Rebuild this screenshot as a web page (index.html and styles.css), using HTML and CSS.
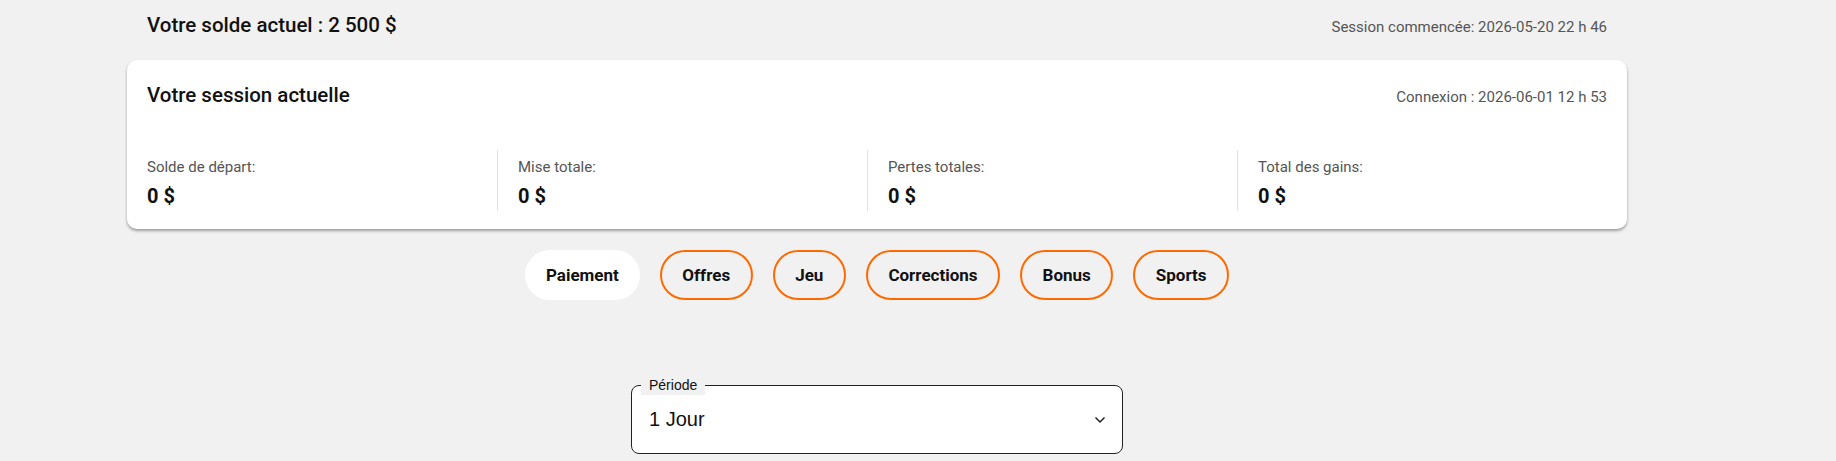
FILE: index.html
```html
<!DOCTYPE html>
<html lang="fr">
<head>
    <meta charset="utf-8">
    <link rel="stylesheet" href="styles.css">
</head>
<body>
    <main class="page">
        <div class="container">
            <div class="balance-row">
                <h2 class="balance-title">Votre solde actuel : 2 500 $</h2>
                <span class="meta">Session commencée: 2026-05-20 22 h 46</span>
            </div>

            <section class="session-card">
                <div class="session-header">
                    <h3>Votre session actuelle</h3>
                    <span class="meta">Connexion : 2026-06-01 12 h 53</span>
                </div>
                <div class="stats">
                    <div class="stat">
                        <span class="stat-label">Solde de départ:</span>
                        <span class="stat-value">0 $</span>
                    </div>
                    <div class="stat">
                        <span class="stat-label">Mise totale:</span>
                        <span class="stat-value">0 $</span>
                    </div>
                    <div class="stat">
                        <span class="stat-label">Pertes totales:</span>
                        <span class="stat-value">0 $</span>
                    </div>
                    <div class="stat">
                        <span class="stat-label">Total des gains:</span>
                        <span class="stat-value">0 $</span>
                    </div>
                </div>
            </section>

            <nav class="tabs">
                <button class="tab active">Paiement</button>
                <button class="tab">Offres</button>
                <button class="tab">Jeu</button>
                <button class="tab">Corrections</button>
                <button class="tab">Bonus</button>
                <button class="tab">Sports</button>
            </nav>

            <div class="filters">
                <div class="field">
                    <label class="field-label">Période</label>
                    <div class="select">
                        <span>1 Jour</span>
                        <svg class="select-arrow" width="12" height="8" viewBox="0 0 12 8">
                            <path d="M1.5 1.5 L6 6 L10.5 1.5" fill="none" stroke="#222" stroke-width="1.5"/>
                        </svg>
                    </div>
                </div>
            </div>
        </div>
    </main>
</body>
</html>
```

FILE: styles.css
```css
body {
    margin: 0;
    background-color: #f1f1f1;
    font-family: Roboto, "Liberation Sans", sans-serif;
    color: #111;
}

.container {
    width: 1500px;
    margin-left: 127px;
}

.balance-row {
    display: flex;
    justify-content: space-between;
    align-items: baseline;
    padding: 13px 20px 0;
    margin-bottom: 21px;
    line-height: 24px;
}

.balance-title {
    margin: 0;
    font-size: 20.5px;
    font-weight: 500;
}

.meta {
    font-size: 15px;
    color: #555;
}

.session-card {
    background-color: white;
    border-radius: 10px;
    box-shadow: 0 2px 3px rgba(0, 0, 0, 0.35);
    padding: 20px 20px 18px;
}

.session-header {
    display: flex;
    justify-content: space-between;
    align-items: baseline;
}

.session-header h3 {
    margin: 0;
    font-size: 20.5px;
    font-weight: 500;
    line-height: 30px;
}

.stats {
    display: grid;
    grid-template-columns: repeat(4, 1fr);
    margin: 40px 0 0 -20px;
}

.stat {
    display: flex;
    flex-direction: column;
    padding: 7px 20px 3px;
}

.stat + .stat {
    border-left: 1px solid #e2e2e2;
}

.stat-label {
    font-size: 15px;
    line-height: 20px;
    color: #555;
}

.stat-value {
    margin-top: 7px;
    font-size: 20px;
    font-weight: 700;
    line-height: 24px;
}

.tabs {
    display: flex;
    justify-content: center;
    gap: 20px;
    margin-top: 21px;
}

.tab {
    height: 50px;
    padding: 0 20.5px;
    border: 2px solid #ff6a00;
    border-radius: 25px;
    background: transparent;
    font-family: Roboto, "Liberation Sans", sans-serif;
    font-size: 17px;
    font-weight: 700;
    color: #111;
    cursor: pointer;
}

.tab.active {
    padding: 0 19px;
    background-color: white;
    border-color: white;
}

.filters {
    display: flex;
    justify-content: center;
    margin-top: 85px;
}

.field {
    position: relative;
    width: 492px;
}

.field-label {
    position: absolute;
    top: -10px;
    left: 10px;
    padding: 0 8px;
    background-color: #f1f1f1;
    font-family: "Liberation Sans", Arial, sans-serif;
    font-size: 14px;
    line-height: 20px;
    color: #111;
}

.select {
    box-sizing: border-box;
    height: 69px;
    display: flex;
    justify-content: space-between;
    align-items: center;
    padding: 0 16px 0 17px;
    border: 1px solid #222;
    border-radius: 8px;
    background-color: white;
    font-family: "Liberation Sans", Arial, sans-serif;
    font-size: 20px;
    color: #111;
}
```
